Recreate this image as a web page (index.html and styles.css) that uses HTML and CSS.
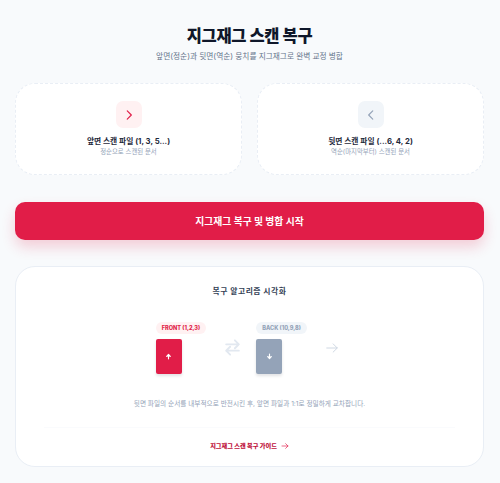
FILE: index.html
```html
<!DOCTYPE html>
<html lang="ko">
<head>
<meta charset="utf-8">
<title>지그재그 스캔 복구</title>
<link rel="stylesheet" href="styles.css">
</head>
<body>
<main class="page">
  <header class="head">
    <h1>지그재그 스캔 복구</h1>
    <p>앞면(정순)과 뒷면(역순) 뭉치를 지그재그로 완벽 교정 병합</p>
  </header>
  <section class="uploads">
    <div class="drop">
      <span class="tile tile-red">
        <svg viewBox="0 0 24 24" width="14" height="14"><path d="M9 5l7 7-7 7" class="s-red"/></svg>
      </span>
      <strong>앞면 스캔 파일 (1, 3, 5...)</strong>
      <small>정순으로 스캔된 문서</small>
    </div>
    <div class="drop">
      <span class="tile tile-grey">
        <svg viewBox="0 0 24 24" width="14" height="14"><path d="M15 5l-7 7 7 7" class="s-grey"/></svg>
      </span>
      <strong>뒷면 스캔 파일 (...6, 4, 2)</strong>
      <small>역순(마지막부터) 스캔된 문서</small>
    </div>
  </section>
  <button class="start">지그재그 복구 및 병합 시작</button>
  <section class="panel">
    <h2>복구 알고리즘 시각화</h2>
    <div class="diagram">
      <div class="col">
        <span class="badge badge-red">FRONT (1,2,3)</span>
        <div class="sheet sheet-red"><svg viewBox="0 0 24 24" width="7" height="7"><path d="M12 20V6M6 12l6-7 6 7" class="s-white"/></svg></div>
      </div>
      <svg class="swap" viewBox="0 0 24 24" width="19" height="19"><path d="M4 8h16M15 3l5 5-5 5M20 16H4M9 11l-5 5 5 5" class="s-pale"/></svg>
      <div class="col">
        <span class="badge badge-grey">BACK (10,9,8)</span>
        <div class="sheet sheet-grey"><svg viewBox="0 0 24 24" width="7" height="7"><path d="M12 4v14M6 12l6 7 6-7" class="s-white"/></svg></div>
      </div>
      <svg class="next" viewBox="0 0 24 24" width="14" height="14"><path d="M3 12h18M14 5l7 7-7 7" class="s-pale2"/></svg>
    </div>
    <p class="note">뒷면 파일의 순서를 내부적으로 반전시킨 후, 앞면 파일과 1:1로 정밀하게 교차합니다.</p>
    <div class="foot">
      <a href="#">지그재그 스캔 복구 가이드 <svg viewBox="0 0 24 24" width="8" height="8"><path d="M3 12h18M14 5l7 7-7 7" class="s-red"/></svg></a>
    </div>
  </section>
</main>
</body>
</html>
```

FILE: styles.css
```css
* { box-sizing: border-box; }
html, body { margin: 0; padding: 0; }
body {
  width: 500px;
  height: 483px;
  overflow: hidden;
  background: #f8fafc;
  font-family: Inter, "Noto Sans CJK KR", sans-serif;
  color: #0f172a;
}
.page { padding: 25px 16px 0 15px; }
.head { text-align: center; }
.head h1 { margin: 0; font-size: 16.5px; line-height: 22px; font-weight: 800; letter-spacing: -0.3px; }
.head p { margin: 5px 0 0; font-size: 7.7px; line-height: 10px; color: #64748b; }
.uploads { display: grid; grid-template-columns: 1fr 1fr; gap: 15px; margin-top: 21px; }
.drop {
  height: 92px;
  background: #fff;
  border: 1px dashed #e9eef5;
  border-radius: 20px;
  display: flex;
  flex-direction: column;
  align-items: center;
  padding-top: 17px;
}
.tile { width: 26px; height: 27px; border-radius: 7px; display: flex; align-items: center; justify-content: center; }
.tile-red { background: #fff1f2; }
.tile-grey { background: #f1f5f9; }
.drop strong { margin-top: 8px; font-size: 7.75px; line-height: 10px; font-weight: 700; color: #1e293b; }
.drop small { margin-top: 2px; font-size: 6.4px; line-height: 9px; color: #94a3b8; }
svg { display: block; fill: none; }
.s-red, .s-grey, .s-white, .s-pale, .s-pale2 { fill: none; stroke-linecap: round; stroke-linejoin: round; stroke-width: 2; }
.s-red { stroke: #e11d48; }
.s-grey { stroke: #94a3b8; }
.s-white { stroke: #fff; stroke-width: 4; }
.s-pale { stroke: #e2e8f0; stroke-width: 2.4; }
.s-pale2 { stroke: #cbd5e1; stroke-width: 1.6; }
.start {
  display: block;
  width: 100%;
  height: 38px;
  margin-top: 27px;
  border: 0;
  border-radius: 10px;
  background: #e11d48;
  color: #fff;
  font: 700 9.8px Inter, "Noto Sans CJK KR", sans-serif;
  box-shadow: 0 7px 14px rgba(225, 29, 72, 0.2);
}
.panel {
  height: 201px;
  margin-top: 26px;
  background: #fff;
  border: 1px solid #e9eef5;
  border-radius: 20px;
  padding-top: 19px;
  text-align: center;
}
.panel h2 { margin: 0; font-size: 7.8px; line-height: 10px; font-weight: 700; color: #334155; letter-spacing: 0.5px; }
.diagram { display: flex; justify-content: center; align-items: flex-start; margin-top: 26px; padding-right: 4px; }
.col { width: 52px; display: flex; flex-direction: column; align-items: flex-start; gap: 5px; }
.badge { height: 12px; padding: 0 6px; border-radius: 6px; font-size: 5.6px; line-height: 12px; font-weight: 800; white-space: nowrap; }
.badge-red { background: #fff1f2; color: #e11d48; }
.badge-grey { background: #f1f5f9; color: #94a3b8; }
.sheet { width: 26px; height: 35px; border-radius: 2px; display: flex; align-items: center; justify-content: center; box-shadow: 0 2px 3px rgba(15, 23, 42, 0.12); }
.sheet-red { background: #e11d48; }
.sheet-grey { background: #94a3b8; }
.swap { margin: 16px 14.5px 0 15px; }
.next { margin: 19px 0 0 17px; }
.note { margin: 25px 0 0; font-size: 6.65px; line-height: 10px; color: #94a3b8; }
.foot { display: flex; justify-content: center; margin: 18px 28px 0; padding-top: 13px; border-top: 1px solid #fafbfd; }
.foot a { display: flex; align-items: center; gap: 4px; font-size: 6.2px; line-height: 10px; font-weight: 800; color: #be123c; text-decoration: none; }
```
